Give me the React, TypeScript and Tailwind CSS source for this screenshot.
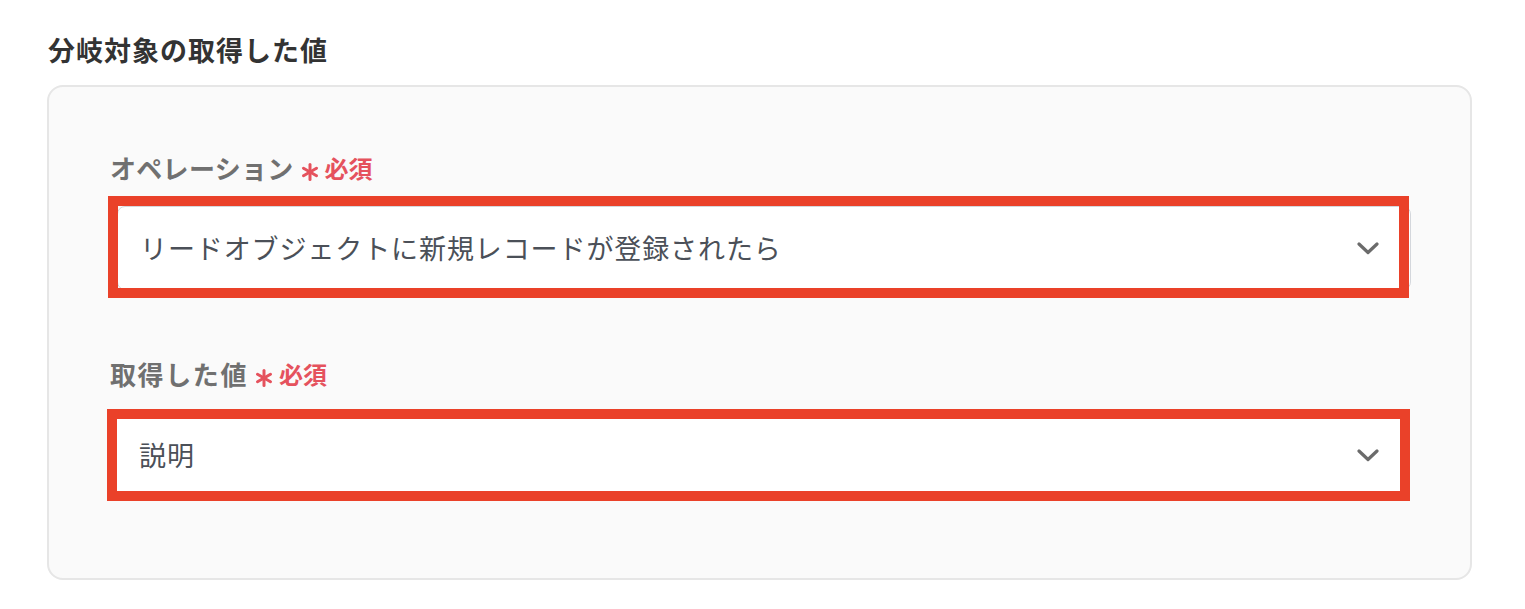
import React from "react";

const font = { fontFamily: '"Noto Sans CJK JP", "Noto Sans", sans-serif' };

function Asterisk() {
  return (
    <svg width="18" height="18" viewBox="0 0 18 18" className="mt-[8px]">
      <g stroke="#e5525d" strokeWidth="3" strokeLinecap="round">
        <line x1="9" y1="1.5" x2="9" y2="16.5" />
        <line x1="2.5" y1="5.25" x2="15.5" y2="12.75" />
        <line x1="2.5" y1="12.75" x2="15.5" y2="5.25" />
      </g>
    </svg>
  );
}

function Chevron() {
  return (
    <svg width="22" height="13" viewBox="0 0 22 13">
      <path d="M2 2 L11 10.5 L20 2" fill="none" stroke="#6b6b6b" strokeWidth="3.2" strokeLinecap="round" strokeLinejoin="round" />
    </svg>
  );
}

function Label({ text, wide }: { text: string; wide?: boolean }) {
  return (
    <div className="flex items-center h-[36px]">
      <span className={wide ? "text-[26px] leading-[36px] font-bold text-[#707070] tracking-[1.6px]" : "text-[26px] leading-[36px] font-bold text-[#707070] tracking-[0.3px]"}>{text}</span>
      <span className="ml-[7px]"><Asterisk /></span>
      <span className="ml-[6px] text-[24px] leading-[36px] font-bold text-[#e5525d]">必須</span>
    </div>
  );
}

export default function App() {
  return (
    <div className="w-full h-[609px] bg-white pl-[47px] pt-[30px]" style={font}>
      <div className="h-[40px] pl-[1px] text-[27px] leading-[40px] font-bold text-[#333333] tracking-[1px]">
        分岐対象の取得した値
      </div>
      <div className="mt-[15px] w-[1425px] h-[495px] border-2 border-[#e6e6e6] rounded-[16px] bg-[#fafafa] pl-[61px] pt-[63px]">
        <Label text="オペレーション" />
        <div className="relative mt-[20px] ml-[7px] w-[1294px] h-[84px]">
          <div className="w-full h-full bg-white border border-[#d4d7dc] rounded-[8px] flex items-center justify-between pl-[22px] pr-[31px]">
            <span className="text-[27px] text-[#4b5058] tracking-[0.9px]">リードオブジェクトに新規レコードが登録されたら</span>
            <Chevron />
          </div>
          <div className="absolute left-[-9px] top-[-10px] w-[1301px] h-[102px] border-[10px] border-[#ea4129]" />
        </div>
        <div className="mt-[66px]">
          <Label text="取得した値" wide />
        </div>
        <div className="relative mt-[27px] ml-[7px] w-[1283px] h-[72px]">
          <div className="w-full h-full bg-white flex items-center justify-between pl-[22px] pr-[21px]">
            <span className="text-[27px] text-[#4b5058] tracking-[0.9px]">説明</span>
            <Chevron />
          </div>
          <div className="absolute left-[-10px] top-[-10px] w-[1303px] h-[92px] border-[10px] border-[#ea4129]" />
        </div>
      </div>
    </div>
  );
}
